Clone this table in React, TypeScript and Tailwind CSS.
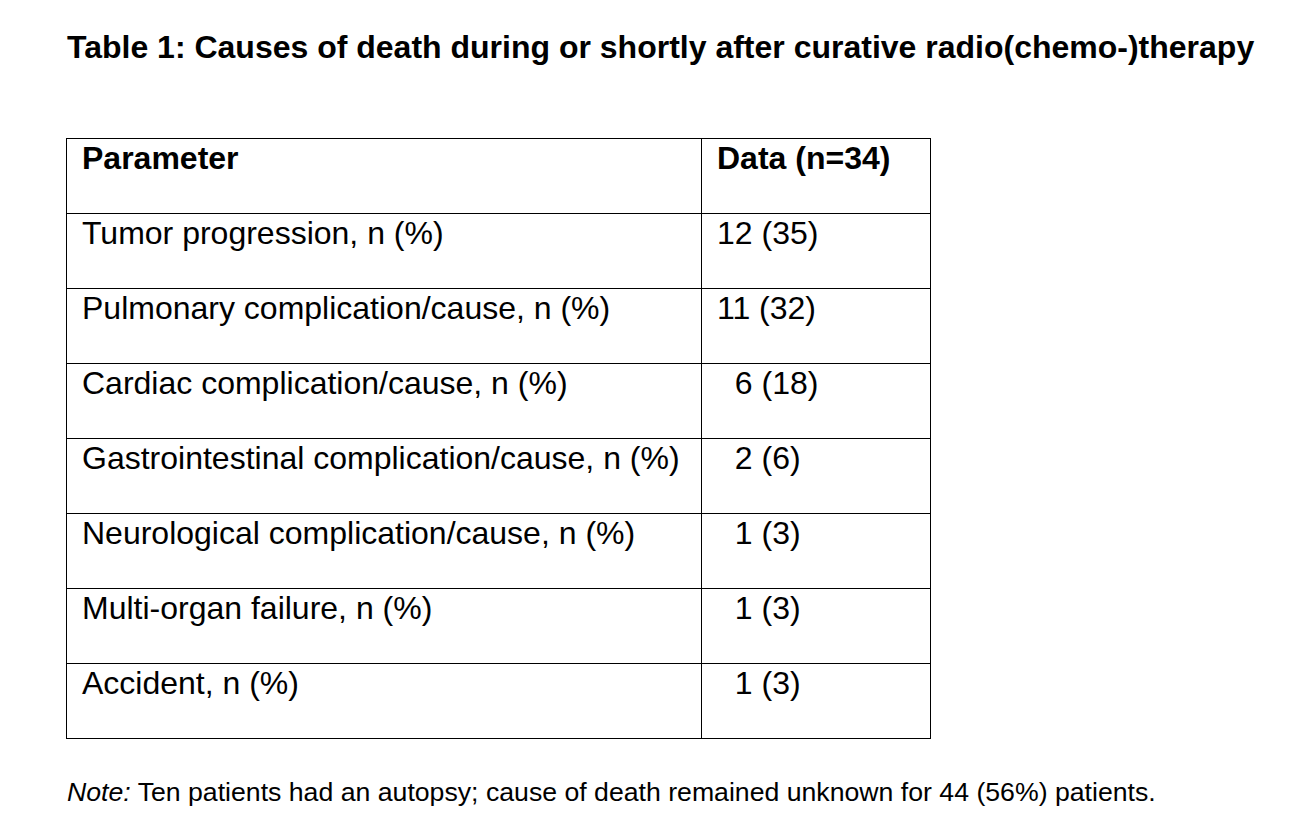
const rows: [string, string][] = [
  ["Tumor progression, n (%)", "12 (35)"],
  ["Pulmonary complication/cause, n (%)", "11 (32)"],
  ["Cardiac complication/cause, n (%)", "\u20076 (18)"],
  ["Gastrointestinal complication/cause, n (%)", "\u20072 (6)"],
  ["Neurological complication/cause, n (%)", "\u20071 (3)"],
  ["Multi-organ failure, n (%)", "\u20071 (3)"],
  ["Accident, n (%)", "\u20071 (3)"],
];

export default function App() {
  return (
    <div className="min-h-screen w-[1296px] bg-white text-black font-['Liberation_Sans',Arial,sans-serif]">
      <div className="pl-[67px] pt-[29px]">
        <h1 className="text-[32px] leading-[37px] font-bold">
          Table 1: Causes of death during or shortly after curative radio(chemo-)therapy
        </h1>
      </div>

      <div className="ml-[66px] mt-[72px] w-[865px] border border-black">
        <div className="flex h-[74px] font-bold">
          <div className="w-[635px] border-r border-black pl-[15px] pt-[1px] text-[32px] leading-[37px]">Parameter</div>
          <div className="flex-1 pl-[15px] pt-[1px] text-[32px] leading-[37px]">Data (n=34)</div>
        </div>
        {rows.map(([label, value]) => (
          <div key={label} className="flex h-[75px] border-t border-black">
            <div className="w-[635px] border-r border-black pl-[15px] pt-[1px] text-[32px] leading-[37px]">{label}</div>
            <div className="flex-1 pl-[15px] pt-[1px] text-[32px] leading-[37px]">{value}</div>
          </div>
        ))}
      </div>

      <p className="pl-[67px] mt-[38px] text-[26.67px] leading-[31px]">
        <i>Note:</i> Ten patients had an autopsy; cause of death remained unknown for 44 (56%) patients.
      </p>
    </div>
  );
}
